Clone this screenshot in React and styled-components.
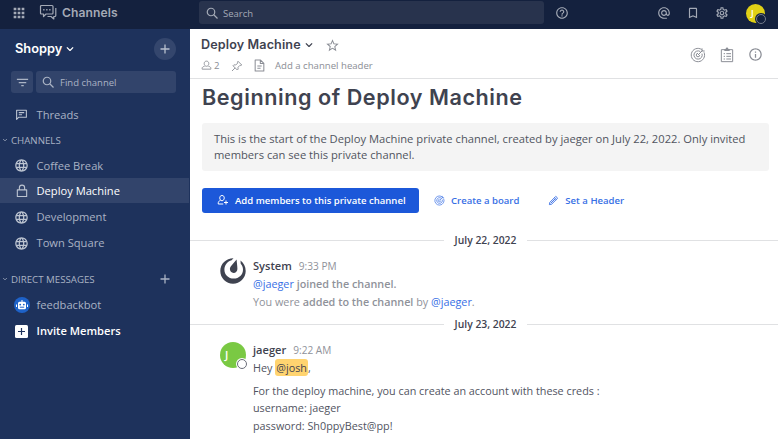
import React from "react";
import styled, { createGlobalStyle, css } from "styled-components";
import {
  MdApps, MdHelpOutline, MdInfoOutline, MdLanguage, MdFilterList,
  MdAlternateEmail, MdBookmarkBorder, MdStarBorder, MdOutlineSettings,
} from "react-icons/md";

const GlobalStyle = createGlobalStyle`
  * { box-sizing: border-box; }
  body { margin: 0; overflow: hidden; }
  button { margin: 0; padding: 0; border: 0; background: none; font: inherit; color: inherit; }
  svg { display: block; flex: none; }
`;

const Page = styled.div`
  width: 778px;
  height: 439px;
  display: flex;
  flex-direction: column;
  overflow: hidden;
  background: #fff;
  color: #3f4350;
  font-family: "Open Sans", sans-serif;
  font-size: 10.8px;
  white-space: nowrap;
`;

const TopBar = styled.header`
  height: 29px;
  flex: none;
  display: grid;
  grid-template-columns: 199px 345px 1fr auto;
  background: #14213e;
  color: #a4aab6;
`;

const Brand = styled.div`
  display: flex;
  align-items: center;
  height: 26px;
  padding-left: 11px;
`;

const BrandName = styled.span`
  margin-left: 5px;
  font: 600 12.1px/20px Inter, sans-serif;
  letter-spacing: 0.1px;
`;

const AppIcon = styled.span`
  margin-left: 12px;
  margin-top: -2px;
`;

const GlobalSearch = styled.div`
  display: flex;
  align-items: center;
  gap: 5px;
  height: 23px;
  margin-top: 1px;
  padding-left: 7px;
  border-radius: 3px;
  background: #28334d;
  font-size: 9.5px;
  line-height: 23px;
  & > span { padding-top: 2px; }
`;

const HelpSlot = styled.div`
  height: 26px;
  padding-left: 11px;
  display: flex;
  align-items: center;
`;

const TopActions = styled.div`
  height: 26px;
  display: flex;
  align-items: center;
  gap: 15px;
  padding-right: 13px;
  & > :last-child { margin-left: 2px; }
`;

const Avatar = styled.span`
  position: relative;
  flex: none;
  display: block;
  width: ${(p) => p.$size}px;
  height: ${(p) => p.$size}px;
  padding-left: ${(p) => p.$inset}px;
  border-radius: 50%;
  background: ${(p) => p.$color};
  color: #fff;
  font-size: ${(p) => p.$letter}px;
  font-weight: 600;
  line-height: ${(p) => p.$size - 1}px;
`;

const Presence = styled.span`
  position: absolute;
  right: -1px;
  bottom: ${(p) => p.$bottom}px;
  width: 10px;
  height: 10px;
  border-radius: 50%;
  border: 1px solid ${(p) => p.$ring};
  background: ${(p) => p.$bg};
  box-shadow: 0 0 0 1px ${(p) => p.$bg};
`;

const Body = styled.div`
  flex: 1;
  min-height: 0;
  display: grid;
  grid-template-columns: 190px 1fr;
`;

const Sidebar = styled.nav`
  background: #1e325c;
  color: #aab3c4;
  font-size: 11.15px;
`;

const TeamHeader = styled.div`
  height: 41px;
  margin-bottom: 1px;
  display: flex;
  align-items: center;
  padding: 0 14px 1px 15px;
  color: #fff;
  font: 600 12.8px/20px Inter, sans-serif;
  & > svg { margin: 0 0 0 3px; }
`;

const AddButton = styled.button`
  width: 22px;
  height: 22px;
  margin-left: auto;
  border-radius: 50%;
  display: grid;
  place-items: center;
  background: #34466d;
  color: #b8c0ce;
`;

const Finder = styled.div`
  height: 22px;
  display: grid;
  grid-template-columns: 22px 140px;
  gap: 3px;
  padding-left: 11px;
`;

const FinderBox = styled.div`
  height: 22px;
  display: flex;
  align-items: center;
  justify-content: ${(p) => (p.$center ? "center" : "flex-start")};
  gap: 6px;
  padding: ${(p) => (p.$center ? 0 : "0 6px")};
  border-radius: 3px;
  background: #32446b;
  font-size: 9.5px;
  & > span { padding-top: 1px; }
`;

const NavRow = styled.div`
  height: ${(p) => p.$h || 26}px;
  margin-right: 1px;
  display: grid;
  grid-template-columns: 23px auto;
  align-items: center;
  padding-left: 13.5px;
  line-height: 20px;
  ${(p) => p.$top && css`margin-top: ${p.$top}px;`}
  ${(p) => p.$active && css`background: #32446b; color: #fff;`}
  ${(p) => p.$strong && css`color: #fff; font-weight: 600;`}
`;

const IconSlot = styled.span`
  width: 16px;
  display: grid;
  place-items: center;
  color: ${(p) => (p.$bright ? "#fff" : "#bcc4d1")};
`;

const GroupLabel = styled.div`
  height: 26px;
  display: flex;
  align-items: center;
  gap: 3px;
  padding: 0 19px 0 2px;
  font-size: 9.7px;
  font-weight: 500;
  margin-top: ${(p) => p.$top || 0}px;
`;

const Push = styled.span`
  margin-left: auto;
`;

const Main = styled.main`
  min-width: 0;
`;

const ChannelHeader = styled.div`
  height: 50px;
  display: flex;
  justify-content: space-between;
  border-bottom: 1px solid #e0e1e3;
`;

const ChannelInfo = styled.div`
  padding: 6px 0 0 11px;
`;

const ChannelTitle = styled.div`
  height: 20px;
  display: flex;
  align-items: center;
  font: 600 12.6px/20px Inter, sans-serif;
  letter-spacing: 0.12px;
  & > svg { margin-left: 3px; }
  & > svg + svg { margin-left: 11px; color: #8b8e96; }
`;

const ChannelMeta = styled.div`
  height: 21px;
  display: flex;
  align-items: center;
  color: #8b8e96;
  font-size: 9.6px;
`;

const MetaItem = styled.span`
  display: flex;
  align-items: center;
  gap: 2px;
  width: ${(p) => p.$w}px;
`;

const ChannelTools = styled.div`
  display: flex;
  align-items: center;
  gap: 13px;
  padding: 2px 15px 0 0;
  color: #8b8e96;
`;

const Intro = styled.section`
  padding: 2px 9px 0 12px;
`;

const IntroTitle = styled.h1`
  margin: 0;
  color: #3f4350;
  font: 600 21.6px/32px Inter, sans-serif;
  letter-spacing: 0.56px;
`;

const IntroNote = styled.p`
  height: 48px;
  margin: 10px 0 0;
  padding: 8px 12px;
  border-radius: 3px;
  background: #f4f4f4;
  color: #51545f;
  font-size: 11.2px;
  line-height: 16px;
  white-space: normal;
`;

const IntroActions = styled.div`
  height: 26px;
  margin-top: 16px;
  display: flex;
  align-items: center;
  color: #386fe5;
  font-size: 9.55px;
  font-weight: 600;
`;

const PrimaryButton = styled.button`
  width: 217px;
  height: 25px;
  display: flex;
  align-items: center;
  gap: 6px;
  padding-left: 15px;
  border-radius: 3px;
  background: #1c58d9;
  color: #fff;
`;

const LinkButton = styled.button`
  display: flex;
  align-items: center;
  gap: 6px;
  margin-left: ${(p) => p.$left}px;
`;

const DateDivider = styled.div`
  height: 20px;
  margin-top: ${(p) => p.$top}px;
  display: grid;
  grid-template-columns: 254px 83px 1fr;
  align-items: center;
  text-align: center;
  font-size: 10.35px;
  font-weight: 600;
  &::before, &::after {
    content: "";
    height: 1px;
    background: #e0e1e3;
  }
`;

const Post = styled.article`
  display: grid;
  grid-template-columns: 33px 1fr;
  padding: 6px 0 0 30px;
`;

const PostMark = styled.div`
  padding-top: 2px;
`;

const PostMeta = styled.div`
  height: 19px;
  display: flex;
  align-items: flex-start;
  gap: 7px;
  padding-top: 1px;
  color: #8f929a;
  font-size: 10.1px;
  line-height: 18px;
`;

const Author = styled.strong`
  color: #3f4350;
  font-size: 11.1px;
  font-weight: 600;
`;

const Line = styled.p`
  height: ${(p) => p.$h || 18}px;
  margin: ${(p) => p.$top || 0}px 0 0;
  line-height: 18px;
  color: ${(p) => (p.$muted ? "#8f929a" : "#51545f")};
  & > b { font-weight: 600; }
`;

const Mention = styled.a`
  color: #386fe5;
`;

const OwnMention = styled.mark`
  padding: 1px 1px;
  border-radius: 3px;
  background: #ffd470;
  color: #3f4350;
`;

const Stroke = ({ size = 14, w = 1.8, children }) => (
  <svg width={size} height={size} viewBox="0 0 24 24" fill="none" stroke="currentColor" strokeWidth={w} strokeLinejoin="round">{children}</svg>
);
const Chevron = ({ size = 10, w = 3 }) => <Stroke size={size} w={w}><path d="M4.500 8l7.500 7.500L19.500 8" /></Stroke>;
const Plus = ({ size = 12 }) => <Stroke size={size} w={2.6}><path d="M12 3v18M3 12h18" /></Stroke>;
const Magnifier = ({ size = 12 }) => <Stroke size={size} w={2.4}><circle cx="10" cy="10" r="7.5" /><path d="M15.5 15.5L23 23" /></Stroke>;
const Lock = () => <Stroke size={14} w={1.9}><path d="M4 10h16v11.5H4zM7.5 10V6.5a4.5 4.5 0 019 0V10" /></Stroke>;
const Threads = () => <Stroke size={13} w={2}><path d="M3 21V4h18v13H7zM7 8.5h10M7 12.5h6" /></Stroke>;
const Member = () => <Stroke size={11} w={2}><path d="M12 2.5c3 0 5 2.2 5 5.2s-2 6-5 6-5-3-5-6 2-5.2 5-5.2zM8 13.5c-3 .8-5.500 2-5.500 4.500V20h19v-2c0-2.500-2.500-3.700-5.500-4.500" /></Stroke>;
const MemberPlus = () => <Stroke size={12} w={2}><path d="M10 3c3 0 4.500 2 4.500 4.800S13 13.500 10 13.500 5.500 10.600 5.500 7.800 7 3 10 3zM7 13c-3 1-4.500 2-4.500 4.500V20h10M18 13v8M14 17h8" /></Stroke>;
const Pin = () => <Stroke size={12} w={1.8}><path d="M14 2.500l7.500 7.500-2 1-1.500-.5-4 4 .3 3.700-1.800 1.800L4 11.500l1.800-1.800 3.700.3 4-4-.5-1.500zM8.200 15.800L2 22" /></Stroke>;
const Document = () => <Stroke size={13} w={1.9}><path d="M4 2h10l6 6v14H4zM13.500 2v6.500H20M8 13h8M8 17h6" /></Stroke>;
const Pencil = () => <Stroke size={11} w={2}><path d="M3 21l1-5L17 3l4 4L8 20zM14 6l4 4M6 18L16 8" /></Stroke>;
const Target = ({ size = 16 }) => (
  <Stroke size={size} w={1.5}>
    <path d="M17.500 3.800A10 10 0 1021 8M15.500 6.800A6.200 6.200 0 1018 10M12 9.500a2.600 2.600 0 102.600 2.600M12 12l7-7M18 2v4h4" />
  </Stroke>
);
const Checklist = () => (
  <Stroke size={16} w={1.5}>
    <path d="M3.500 4h17v18h-17zM7 10h2M11 10h7M7 14h2M11 14h7M7 18h2M11 18h7" />
    <path d="M8 3h2c0-3 4-3 4 0h2v3H8z" fill="currentColor" stroke="none" />
  </Stroke>
);
const ChannelsIcon = () => (
  <svg width="18" height="18" viewBox="0 0 18 18" fill="none" stroke="currentColor" strokeWidth="1.2" strokeLinejoin="round">
    <path d="M2.500 2.500h10.500q1 0 1 1v6.500q0 1-1 1H7l-2.500 2.500V11h-2q-1 0-1-1V3.500q0-1 1-1zM16.800 5v7.500q0 1-1 1h-1V16l-2.800-2.500H8.500" />
    <path d="M4.200 6.800h1.300M7.200 6.800h1.300M10.200 6.800h1.300" strokeWidth="1.400" />
  </svg>
);
const BotIcon = () => (
  <svg width="16" height="16" viewBox="0 0 16 16">
    <circle cx="8" cy="8" r="8" fill="#1e62c8" />
    <path d="M7.500 3h1v1.800h-1zM5.500 4.800h5q1.500 0 1.500 1.500v4.500q0 1.500-1.500 1.500h-5q-1.500 0-1.500-1.500V6.300q0-1.500 1.500-1.500zM2 7.500h1v2.500H2zM13 7.500h1v2.500h-1z" fill="#fff" />
    <circle cx="6.200" cy="7.600" r=".9" fill="#1e62c8" /><circle cx="9.800" cy="7.600" r=".9" fill="#1e62c8" />
    <path d="M5.800 10.200h4.400" stroke="#1e62c8" />
  </svg>
);
const InviteIcon = () => (
  <svg width="13" height="13" viewBox="0 0 13 13"><rect width="13" height="13" rx="1.500" fill="#fff" /><path d="M6.500 3v7M3 6.500h7" stroke="#1e325c" strokeWidth="1.200" /></svg>
);
const SystemLogo = () => (
  <svg width="26" height="26" viewBox="0 0 26 26" fill="#3f4350">
    <path d="M13.500.3C6 .3.300 6 .300 13s5.700 12.700 12.700 12.700S25.700 20 25.700 13c0-4.500-2.100-8-5.200-10.400l.2 3.200c1.500 1.800 2.300 3.500 2.300 5.900 0 5-4 8.800-9.300 8.800s-9.300-3.800-9.300-8.800c0-4.500 3-8.300 7.200-9.400z" />
    <path d="M16.600 1.500c.2 3.500.8 6.500.8 9.500 0 2.300-1.600 4-3.800 4s-3.700-1.700-3.700-3.900c0-1.300.4-2 1.200-3.100z" />
  </svg>
);

const CHANNELS = [
  { name: "Coffee Break", h: 25 },
  { name: "Deploy Machine", h: 25, active: true },
  { name: "Development", top: 1 },
  { name: "Town Square" },
];

export default function App() {
  return (
    <Page>
      <GlobalStyle />
      <TopBar>
        <Brand>
          <MdApps size={16} />
          <AppIcon><ChannelsIcon /></AppIcon>
          <BrandName>Channels</BrandName>
        </Brand>
        <GlobalSearch><Magnifier /><span>Search</span></GlobalSearch>
        <HelpSlot><MdHelpOutline size={14} /></HelpSlot>
        <TopActions>
          <MdAlternateEmail size={14} />
          <MdBookmarkBorder size={14} />
          <MdOutlineSettings size={14} />
          <Avatar $size={19} $inset={5} $letter={9} $color="#e0d016">
            J<Presence $bottom={-1} $ring="#737b8c" $bg="#14213e" />
          </Avatar>
        </TopActions>
      </TopBar>
      <Body>
        <Sidebar>
          <TeamHeader>Shoppy<Chevron size={10} /><AddButton aria-label="Add"><Plus /></AddButton></TeamHeader>
          <Finder>
            <FinderBox $center><MdFilterList size={15} /></FinderBox>
            <FinderBox><Magnifier /><span>Find channel</span></FinderBox>
          </Finder>
          <NavRow $top={9} $h={25}><IconSlot><Threads /></IconSlot>Threads</NavRow>
          <GroupLabel><Chevron size={6} />CHANNELS</GroupLabel>
          {CHANNELS.map((c) => (
            <NavRow key={c.name} $h={c.h} $top={c.top} $active={c.active}>
              <IconSlot>{c.active ? <Lock /> : <MdLanguage size={15} />}</IconSlot>{c.name}
            </NavRow>
          ))}
          <GroupLabel $top={10}><Chevron size={6} />DIRECT MESSAGES<Push><Plus size={12} /></Push></GroupLabel>
          <NavRow $h={25}><IconSlot><BotIcon /></IconSlot>feedbackbot</NavRow>
          <NavRow $top={1} $strong><IconSlot $bright><InviteIcon /></IconSlot>Invite Members</NavRow>
        </Sidebar>
        <Main>
          <ChannelHeader>
            <ChannelInfo>
              <ChannelTitle>Deploy Machine<Chevron size={10} /><MdStarBorder size={15} /></ChannelTitle>
              <ChannelMeta>
                <MetaItem $w={30}><Member />2</MetaItem>
                <MetaItem $w={22}><Pin /></MetaItem>
                <MetaItem $w={22}><Document /></MetaItem>
                Add a channel header
              </ChannelMeta>
            </ChannelInfo>
            <ChannelTools><Target /><Checklist /><MdInfoOutline size={15} /></ChannelTools>
          </ChannelHeader>
          <Intro>
            <IntroTitle>Beginning of Deploy Machine</IntroTitle>
            <IntroNote>This is the start of the Deploy Machine private channel, created by jaeger on July 22, 2022. Only invited members can see this private channel.</IntroNote>
            <IntroActions>
              <PrimaryButton><MemberPlus />Add members to this private channel</PrimaryButton>
              <LinkButton $left={15}><Target size={11} />Create a board</LinkButton>
              <LinkButton $left={29}><Pencil />Set a Header</LinkButton>
            </IntroActions>
          </Intro>
          <DateDivider $top={17}>July 22, 2022</DateDivider>
          <Post>
            <PostMark><SystemLogo /></PostMark>
            <div>
              <PostMeta><Author>System</Author>9:33 PM</PostMeta>
              <Line $muted><Mention>@jaeger</Mention> <b>joined the channel.</b></Line>
              <Line $muted>You were <b>added to the channel</b> by <Mention>@jaeger</Mention>.</Line>
            </div>
          </Post>
          <DateDivider $top={3}>July 23, 2022</DateDivider>
          <Post>
            <PostMark>
              <Avatar $size={26} $inset={5} $letter={11} $color="#7ac943">
                J<Presence $bottom={-1} $ring="#6b6e79" $bg="#fff" />
              </Avatar>
            </PostMark>
            <div>
              <PostMeta><Author>jaeger</Author>9:22 AM</PostMeta>
              <Line>Hey <OwnMention>@josh</OwnMention>,</Line>
              <Line $top={5} $h={17}>For the deploy machine, you can create an account with these creds :</Line>
              <Line>username: jaeger</Line>
              <Line>password: Sh0ppyBest@pp!</Line>
            </div>
          </Post>
        </Main>
      </Body>
    </Page>
  );
}
